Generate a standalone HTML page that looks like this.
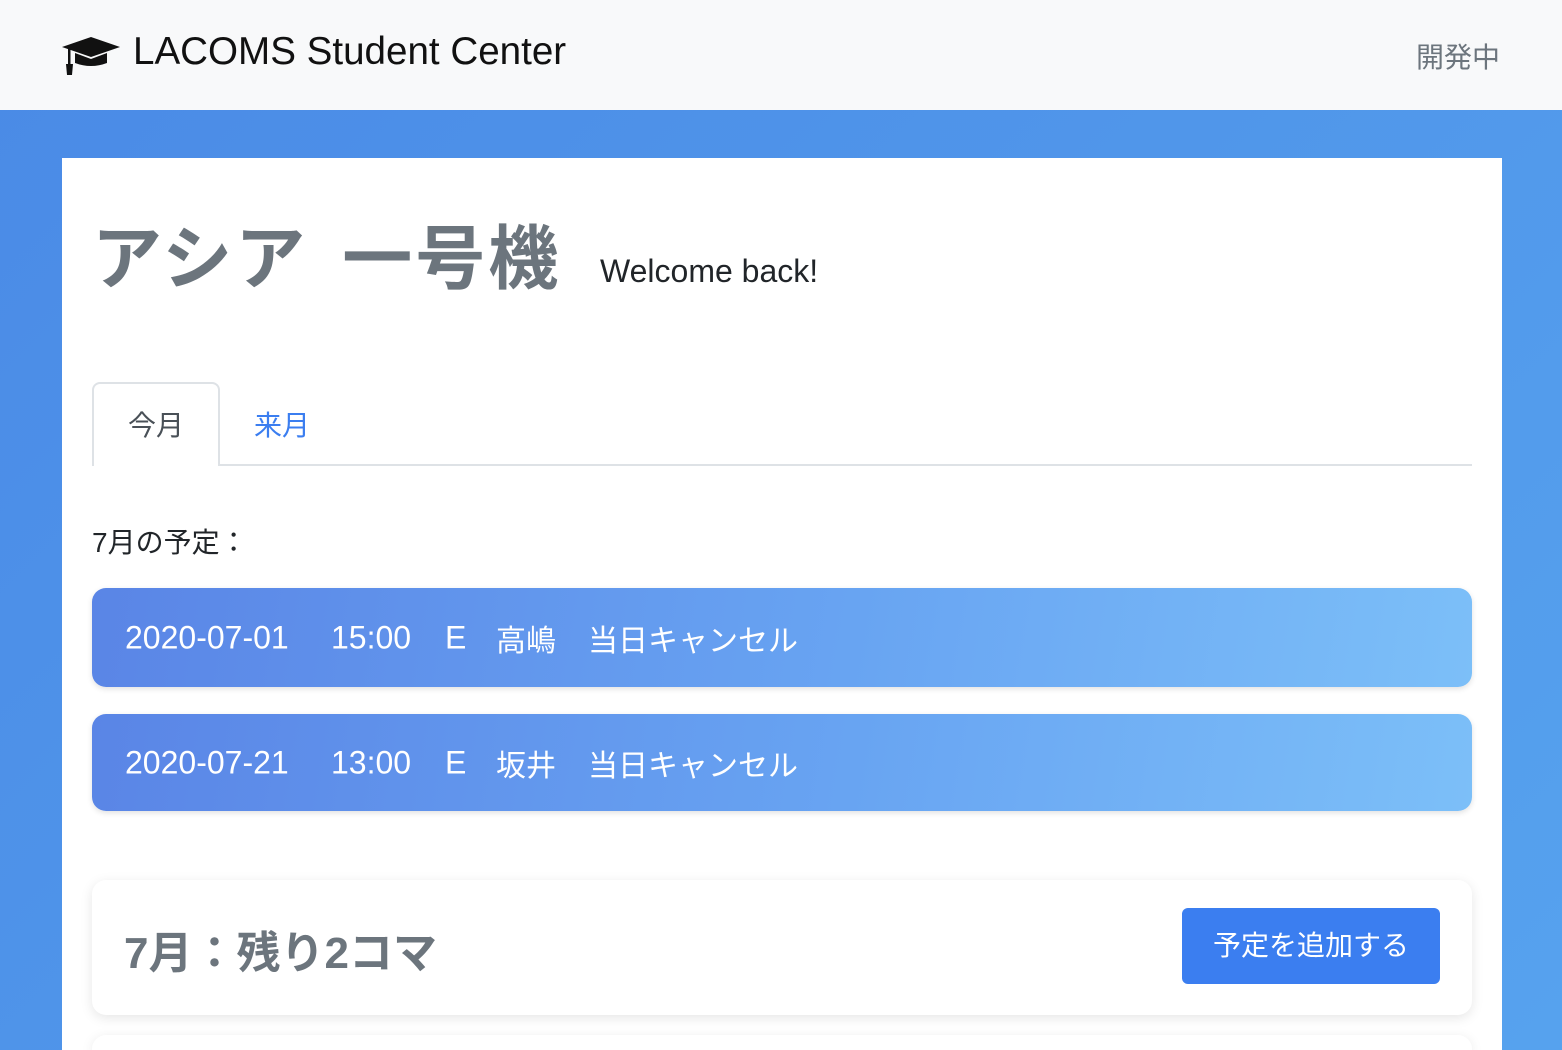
<!DOCTYPE html>
<html style="width:1562px;height:1050px;overflow:hidden"><head><meta charset="utf-8"><style>
*{margin:0;padding:0;box-sizing:border-box}
body{width:1562px;height:1050px;overflow:hidden;background:linear-gradient(135deg,#4a8ae6,#56a2ee);font-family:"Liberation Sans","Noto Sans CJK JP",sans-serif;position:relative}
.nav{position:absolute;left:0;top:0;width:1562px;height:110px;background:#f8f9fa}
.brand{position:absolute;left:133px;top:30px;font-size:38.6px;color:#111}
.dev{position:absolute;right:62px;top:36px;font-size:28px;color:#6c757d}
.main{position:absolute;left:62px;top:158px;width:1440px;height:892px;background:#fff;overflow:hidden}
.abs{position:absolute}
.title{left:30px;top:45px;font-size:70px;color:#6c757d;font-weight:bold;letter-spacing:3px;white-space:nowrap}
.wb{left:538px;top:95px;font-size:32px;color:#212529}
.tabline{left:30px;top:306px;width:1380px;height:2px;background:#dee2e6}
.tab{left:30px;top:224px;width:128px;height:84px;border:2px solid #dee2e6;border-bottom:none;border-radius:8px 8px 0 0;background:#fff;font-size:28px;color:#495057;text-align:center;line-height:84px}
.tab2{left:192px;top:226px;font-size:28px;color:#3b7ef0;line-height:84px}
.sub{left:30px;top:363px;font-size:28px;color:#212529}
.ev{left:30px;width:1380px;border-radius:14px;background:linear-gradient(100deg,#5a85e6 0%,#68a4f2 55%,#7cbff8 100%);box-shadow:0 2px 6px rgba(0,0,0,.12);color:#fff;font-size:32px}
.ev span{position:absolute;top:50%;transform:translateY(-50%);white-space:nowrap}
.ev .j{font-size:30px}
.card{left:30px;width:1380px;border-radius:14px;background:#fff;box-shadow:0 3px 12px rgba(0,0,0,.1)}
.ct{left:32px;top:37px;font-size:44px;font-weight:bold;color:#6c757d;white-space:nowrap}
.btn{right:32px;top:28px;width:258px;height:76px;border-radius:6px;background:#3b7ef0;color:#fff;font-size:28px;text-align:center;line-height:76px}
</style></head><body>
<div class="nav">
<svg class="abs" style="left:61px;top:36px" width="60" height="40" viewBox="0 0 60 40"><path d="M30 1 L59 11 L30 21 L1 11 Z" fill="#111"/><path d="M14 17 L14 27 Q30 33 46 27 L46 17 L30 23 Z" fill="#111"/><rect x="7" y="12" width="2.5" height="18" fill="#111"/><path d="M5 28 L12 28 L11 39 L6 39 Z" fill="#111"/></svg>
<div class="brand">LACOMS Student Center</div>
<div class="dev">開発中</div>
</div>
<div class="main">
<div class="abs title">アシア<span style="display:inline-block;width:34px"></span>一号機</div>
<div class="abs wb">Welcome back!</div>
<div class="abs tabline"></div>
<div class="abs tab">今月</div>
<div class="abs tab2">来月</div>
<div class="abs sub">7月の予定：</div>
<div class="abs ev" style="top:430px;height:99px"><span style="left:33px">2020-07-01</span><span style="left:239px">15:00</span><span style="left:353px">E</span><span class="j" style="left:404px">高嶋</span><span class="j" style="left:496px">当日キャンセル</span></div>
<div class="abs ev" style="top:556px;height:97px"><span style="left:33px">2020-07-21</span><span style="left:239px">13:00</span><span style="left:353px">E</span><span class="j" style="left:404px">坂井</span><span class="j" style="left:496px">当日キャンセル</span></div>
<div class="abs card" style="top:722px;height:135px"><div class="abs ct">7月：残り2コマ</div><div class="abs btn">予定を追加する</div></div>
<div class="abs card" style="top:877px;height:15px;border-radius:14px 14px 0 0"></div>
</div>
</body></html>
